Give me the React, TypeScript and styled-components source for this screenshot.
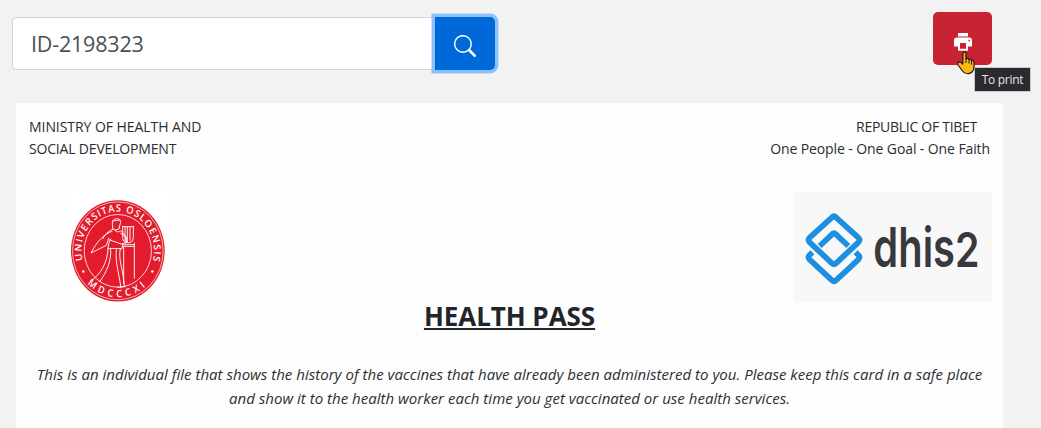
import React from 'react';
import styled, { createGlobalStyle } from 'styled-components';
import { BsSearch } from 'react-icons/bs';

const GlobalStyle = createGlobalStyle`
  *, *::before, *::after { box-sizing: border-box; }
  html, body { margin: 0; height: 100%; overflow: hidden; background: #f2f2f2; }
  body { color: #212529; font-family: 'Open Sans', 'Noto Sans', sans-serif; }
`;

const Page = styled.div`
  height: 428px;
  overflow: hidden;
  display: flex;
  flex-direction: column;
`;

const Toolbar = styled.header`
  display: flex;
  justify-content: space-between;
  align-items: flex-start;
  height: 103px;
  padding: 12px 49px 0 12px;
`;

const SearchGroup = styled.form`
  display: flex;
  margin-top: 5px;
  height: 53px;
`;

const SearchInput = styled.input`
  width: 423px;
  padding: 0 18px;
  border: 1px solid #ced4da;
  border-right: 0;
  border-radius: 5px 0 0 5px;
  outline: 0;
  background: #fff;
  color: #495057;
  font: 400 21.5px 'Open Sans', sans-serif;
  letter-spacing: -0.2px;
`;

const SearchButton = styled.button`
  width: 60px;
  padding: 4px 0 0;
  border: 0;
  border-radius: 0 5px 5px 0;
  background: #0069d9;
  box-shadow: 0 0 0 3.5px #8cc0f9;
  color: #fff;
  display: flex;
  align-items: center;
  justify-content: center;
`;

const PrintAction = styled.div`
  position: relative;
`;

const PrintButton = styled.button`
  width: 59px;
  height: 53px;
  padding: 7px 0 0 1px;
  border: 0;
  border-radius: 5px;
  background: #c82333;
  color: #fff;
  display: flex;
  align-items: center;
  justify-content: center;
`;

const Tooltip = styled.span`
  position: absolute;
  left: 41px;
  top: 55px;
  width: 57px;
  height: 25px;
  border: 1px solid #c9cbd2;
  background: #2b2b2f;
  color: #e4e4e6;
  font-size: 12px;
  line-height: 23px;
  letter-spacing: -0.3px;
  text-align: center;
  white-space: nowrap;
`;

const Pointer = styled.svg`
  position: absolute;
  left: 24px;
  top: 39px;
`;

const Card = styled.main`
  width: 987px;
  margin-left: 16px;
  flex: 1;
  background: #fdfdfd;
  display: flex;
  flex-direction: column;
`;

const Issuers = styled.div`
  display: flex;
  justify-content: space-between;
  padding: 13px 13px 0;
  height: 89px;
`;

const Issuer = styled.div<{ $end?: boolean }>`
  display: flex;
  flex-direction: column;
  align-items: ${(p) => (p.$end ? 'flex-end' : 'flex-start')};
`;

const IssuerLine = styled.span<{ $spacing: number; $inset?: number }>`
  color: #292d31;
  font-size: 14px;
  line-height: 22px;
  white-space: nowrap;
  letter-spacing: ${(p) => p.$spacing}px;
  margin-right: ${(p) => p.$inset ?? 0}px;
`;

const Logos = styled.div`
  display: flex;
  justify-content: space-between;
  height: 110px;
  padding: 0 11px 0 49px;
`;

const Title = styled.h1`
  margin: -1px 0 0;
  font-size: 26px;
  line-height: 30px;
  font-weight: 700;
  text-align: center;
  letter-spacing: -0.05px;
  text-decoration: underline;
  text-decoration-thickness: 2px;
  text-underline-offset: 2px;
`;

const Notice = styled.p`
  margin: 31px 0 0;
  color: #2b2f33;
  font-size: 15px;
  line-height: 24px;
  font-style: italic;
  text-align: center;
`;

const NoticeLine = styled.span`
  display: block;
  white-space: nowrap;
  letter-spacing: 0.02px;
`;

const UniversitySeal = () => (
  <svg width="110" height="110" viewBox="27 21 330 330">
    <rect x="27" y="21" width="330" height="330" fill="#fff" />
    <g transform="translate(185.5 197.5) scale(.925 1)">
      <circle r="152" fill="#e31b2c" />
      <circle r="147" fill="none" stroke="#fff" strokeWidth="2" />
      <circle r="109" fill="none" stroke="#fff" strokeWidth="2.5" />
      <defs>
        <path id="seal-top" d="M-118 0A118 118 0 1 1 118 0A118 118 0 0 1 -118 0" transform="rotate(-14)" />
        <path id="seal-bottom" d="M-139 0A139 139 0 0 0 139 0" />
      </defs>
      <g fill="#fff" fontFamily="Open Sans, sans-serif" fontWeight="600" fontSize="30">
        <text textLength="430"><textPath href="#seal-top" textLength="430">UNIVERSITAS OSLOENSIS</textPath></text>
        <text><textPath href="#seal-bottom" startOffset="50%" textAnchor="middle" letterSpacing="12">MDCCCXI</textPath></text>
      </g>
      <circle cx="-112" cy="62" r="4" fill="#fff" />
      <circle cx="112" cy="62" r="4" fill="#fff" />
    </g>
    <g fill="none" stroke="#fff" strokeWidth="2.8" strokeLinejoin="round" strokeLinecap="round">
      <path d="M170 122c-3-12 0-20 12-21 11 0 14 9 10 17l-3 14-12 3-7-5zM170 108l22-3" />
      <path d="M171 133c-16 6-24 15-30 28M177 136c4 7 13 5 17 1l15 16 3 20-16 4-35-12M164 162c-7 10-6 18-8 28l42 1 2-14" />
      <path d="M168 139C142 148 122 171 105 204L151 181L158 160" />
      <path d="M156 190C156 230 133 271 104 288M164 192c3 34-12 70-33 98M181 194c-4 36 7 66 14 115M193 192c-8 29 10 65 12 110M184 307l23-2" />
      <path d="M200 124v34q0 14 14 15h8q10-2 10-15v-34M207 126v40M214 126v46M222 126v40M200 125h32M194 145l17 12-2 12" />
      <path d="M203 184h32v96M203 184v112M235 174v10M203 179h32" />
    </g>
  </svg>
);

const Dhis2Logo = () => (
  <svg width="198" height="110" viewBox="42 21 594 330">
    <rect x="42" y="21" width="594" height="330" fill="#f8f8f8" />
    <g fill="none" stroke="#1d8fe1" strokeWidth="17" strokeLinejoin="round">
      <path d="M156 97Q162 91 168 97L235 158Q242 165 235 172L168 235Q162 241 156 235L89 172Q82 165 89 158Z" />
      <path d="M119 183L156 148Q162 142 168 148L205 183" />
      <path d="M97 202L89 210Q82 217 89 224L156 286Q162 292 168 286L235 224Q242 217 235 210L227 202" />
    </g>
    <g fill="#39393d" fontFamily="Inter, sans-serif" fontWeight="600">
      <text transform="translate(280 245) scale(.7 1)" fontSize="165" textLength="350" lengthAdjust="spacingAndGlyphs">dhis</text>
      <text transform="translate(525 245) scale(.7 1)" fontSize="144" textLength="105" lengthAdjust="spacingAndGlyphs">2</text>
    </g>
  </svg>
);

const PrinterIcon = () => (
  <svg width="18" height="18" viewBox="0 0 18 18">
    <path d="M4 0h10v3.500H4z" fill="currentColor" />
    <path
      fill="currentColor"
      fillRule="evenodd"
      d="M2.800 4.500H15.200Q18 4.500 18 7.300V13.500H14V17.700H4V13.500H0V7.300Q0 4.500 2.800 4.500ZM6 10v5.800h6V10z"
    />
    <circle cx="15.300" cy="7.600" r=".9" fill="#c82333" />
  </svg>
);

const HandPointer = () => (
  <Pointer width="18" height="24" viewBox="0 0 18 24">
    <path
      d="M6 2Q7.500 0 9 2V8Q11 6.500 12 8.500Q14 7.500 14.500 9.500Q17 9 17 11.500V16Q17 19 15 21Q13 23 10 22.500Q7 22.500 5.500 20L1 14Q0 11.500 2 11Q4 11 5.800 13Z"
      fill="#fdb813" stroke="#1b1b1b" strokeWidth="1.200" strokeLinejoin="round"
    />
    <path d="M9 7v5M12 8.500v4M14.500 9.500v4" stroke="#1b1b1b" strokeWidth="1" fill="none" />
  </Pointer>
);

export default function App() {
  return (
    <Page>
      <GlobalStyle />
      <Toolbar>
        <SearchGroup>
          <SearchInput defaultValue="ID-2198323" aria-label="ID" />
          <SearchButton type="button" aria-label="Search">
            <BsSearch size={22} />
          </SearchButton>
        </SearchGroup>
        <PrintAction>
          <PrintButton type="button" aria-label="Print">
            <PrinterIcon />
          </PrintButton>
          <Tooltip>To print</Tooltip>
          <HandPointer />
        </PrintAction>
      </Toolbar>
      <Card>
        <Issuers>
          <Issuer>
            <IssuerLine $spacing={-0.06}>MINISTRY OF HEALTH AND</IssuerLine>
            <IssuerLine $spacing={-0.18}>SOCIAL DEVELOPMENT</IssuerLine>
          </Issuer>
          <Issuer $end>
            <IssuerLine $spacing={-0.28} $inset={13}>REPUBLIC OF TIBET</IssuerLine>
            <IssuerLine $spacing={-0.1}>One People - One Goal - One Faith</IssuerLine>
          </Issuer>
        </Issuers>
        <Logos>
          <UniversitySeal />
          <Dhis2Logo />
        </Logos>
        <Title>HEALTH PASS</Title>
        <Notice>
          <NoticeLine>
            This is an individual file that shows the history of the vaccines that have already been administered to you. Please keep this card in a safe place
          </NoticeLine>
          <NoticeLine>
            and show it to the health worker each time you get vaccinated or use health services.
          </NoticeLine>
        </Notice>
      </Card>
    </Page>
  );
}
